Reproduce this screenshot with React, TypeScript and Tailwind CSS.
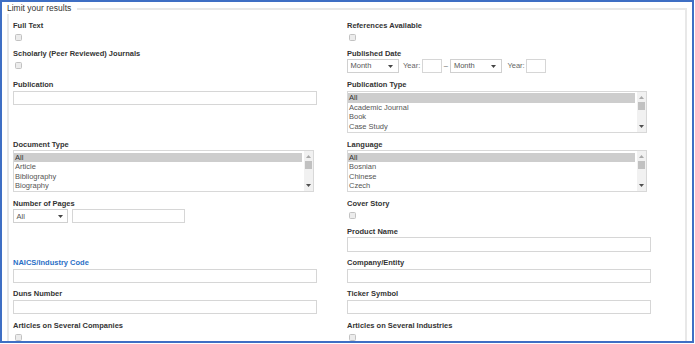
import React from 'react';

const FieldLabel: React.FC<{ children: React.ReactNode; link?: boolean }> = ({ children, link }) => (
  <div className={`text-[7.5px] leading-[10px] font-bold whitespace-nowrap ${link ? 'text-[#2a6fc6]' : 'text-[#333]'}`}>
    {children}
  </div>
);

const CheckBox: React.FC = () => (
  <div className="mt-[3.3px] ml-[2px] w-[7px] h-[7px] rounded-[1.5px] border border-[#c2c2c2] bg-[#ececec]" />
);

const TextBox: React.FC<{ width?: string }> = ({ width = 'w-[304px]' }) => (
  <input type="text" className={`block ${width} h-[14.5px] border border-[#d6d6d6] bg-white outline-none`} />
);

const Caret: React.FC<{ up?: boolean; color?: string }> = ({ up, color = '#444' }) => (
  <svg width="5" height="3" viewBox="0 0 5 3" className="block">
    <polygon points={up ? '0,3 5,3 2.5,0' : '0,0 5,0 2.5,3'} fill={color} />
  </svg>
);

const DropDown: React.FC<{ value: string; width: string; pad: string }> = ({ value, width, pad }) => (
  <div className={`${width} h-[14px] flex items-center border border-[#d0d0d0] bg-white pl-[2.5px] ${pad}`}>
    <span className="text-[7.5px] text-[#555]">{value}</span>
    <span className="ml-auto">
      <Caret />
    </span>
  </div>
);

const ListBox: React.FC<{ options: string[]; width: string }> = ({ options, width }) => (
  <div className={`${width} h-[42px] flex border border-[#d8d8d8] bg-white overflow-hidden`}>
    <div className="flex-1 pt-[1.5px] overflow-hidden">
      {options.map((opt, i) => (
        <div
          key={opt}
          className={`h-[9.4px] pl-[1px] text-[7.5px] leading-[9.4px] whitespace-nowrap ${
            i === 0 ? 'bg-[#cdcdcd] text-[#333]' : 'text-[#555]'
          }`}
        >
          {opt}
        </div>
      ))}
    </div>
    <div className="ml-[2px] w-[9px] flex flex-col items-center bg-[#f1f1f1]">
      <div className="mt-[4px]">
        <Caret up color="#a8a8a8" />
      </div>
      <div className="mt-[3px] w-[7px] h-[8px] bg-[#c1c1c1]" />
      <div className="mt-auto mb-[4px]">
        <Caret color="#505050" />
      </div>
    </div>
  </div>
);

const YearText: React.FC<{ className: string }> = ({ className }) => (
  <span className={`${className} text-[7.5px] text-[#666]`}>Year:</span>
);

export default function App() {
  return (
    <div className="w-[694px] h-[343px] border-2 border-[#3f6fc4] bg-white px-[5px] overflow-hidden font-['Liberation_Sans',Arial,sans-serif]">
      {/* legend row */}
      <div className="flex h-[12px]">
        <span className="pr-[6px] text-[8.5px] leading-[12px] text-[#333] whitespace-nowrap">Limit your results</span>
        <div className="flex-1 mt-[6px] border-t-2 border-r-2 border-[#e8e8e8]" />
      </div>

      {/* fieldset body */}
      <div className="h-[400px] border-l-2 border-r-2 border-[#e8e8e8] pl-[4px] pt-[7px]">
        <div className="grid grid-cols-[334px_334px] grid-rows-[27.8px_31.7px_60px_58.3px_28.2px_30.8px_31.7px_31.3px_auto]">
          {/* row 1 */}
          <div>
            <FieldLabel>Full Text</FieldLabel>
            <CheckBox />
          </div>
          <div>
            <FieldLabel>References Available</FieldLabel>
            <CheckBox />
          </div>

          {/* row 2 */}
          <div>
            <FieldLabel>Scholarly (Peer Reviewed) Journals</FieldLabel>
            <CheckBox />
          </div>
          <div>
            <FieldLabel>Published Date</FieldLabel>
            <div className="mt-[0.3px] flex items-center">
              <DropDown value="Month" width="w-[52px]" pad="pr-[5px]" />
              <YearText className="ml-[4px]" />
              <input type="text" className="ml-[1.5px] w-[20px] h-[14px] border border-[#d6d6d6] outline-none" />
              <span className="ml-[2px] text-[7.5px] text-[#666]">–</span>
              <div className="ml-[2.5px]">
                <DropDown value="Month" width="w-[52px]" pad="pr-[5px]" />
              </div>
              <YearText className="ml-[5px]" />
              <input type="text" className="ml-[1.5px] w-[20px] h-[14px] border border-[#d6d6d6] outline-none" />
            </div>
          </div>

          {/* row 3 */}
          <div>
            <FieldLabel>Publication</FieldLabel>
            <div className="mt-[0.5px]">
              <TextBox />
            </div>
          </div>
          <div>
            <FieldLabel>Publication Type</FieldLabel>
            <div className="mt-[0.5px]">
              <ListBox
                width="w-[300px]"
                options={['All', 'Academic Journal', 'Book', 'Case Study', 'Conference Papers']}
              />
            </div>
          </div>

          {/* row 4 */}
          <div>
            <FieldLabel>Document Type</FieldLabel>
            <ListBox width="w-[301px]" options={['All', 'Article', 'Bibliography', 'Biography', 'Book Entry']} />
          </div>
          <div>
            <FieldLabel>Language</FieldLabel>
            <ListBox width="w-[300px]" options={['All', 'Bosnian', 'Chinese', 'Czech', 'Dutch/Flemish']} />
          </div>

          {/* row 5 */}
          <div>
            <FieldLabel>Number of Pages</FieldLabel>
            <div className="mt-[0.5px] flex items-center">
              <DropDown value="All" width="w-[55px]" pad="pr-[4px]" />
              <input type="text" className="ml-[3.5px] w-[113px] h-[14px] border border-[#d6d6d6] outline-none" />
            </div>
          </div>
          <div>
            <FieldLabel>Cover Story</FieldLabel>
            <CheckBox />
          </div>

          {/* row 6 */}
          <div />
          <div>
            <FieldLabel>Product Name</FieldLabel>
            <div className="mt-[0.3px]">
              <TextBox />
            </div>
          </div>

          {/* row 7 */}
          <div>
            <FieldLabel link>NAICS/Industry Code</FieldLabel>
            <div className="mt-[0.8px]">
              <TextBox />
            </div>
          </div>
          <div>
            <FieldLabel>Company/Entity</FieldLabel>
            <div className="mt-[0.8px]">
              <TextBox />
            </div>
          </div>

          {/* row 8 */}
          <div>
            <FieldLabel>Duns Number</FieldLabel>
            <div className="mt-[0.5px]">
              <TextBox />
            </div>
          </div>
          <div>
            <FieldLabel>Ticker Symbol</FieldLabel>
            <div className="mt-[0.5px]">
              <TextBox />
            </div>
          </div>

          {/* row 9 */}
          <div>
            <FieldLabel>Articles on Several Companies</FieldLabel>
            <CheckBox />
          </div>
          <div>
            <FieldLabel>Articles on Several Industries</FieldLabel>
            <CheckBox />
          </div>
        </div>
      </div>
    </div>
  );
}
